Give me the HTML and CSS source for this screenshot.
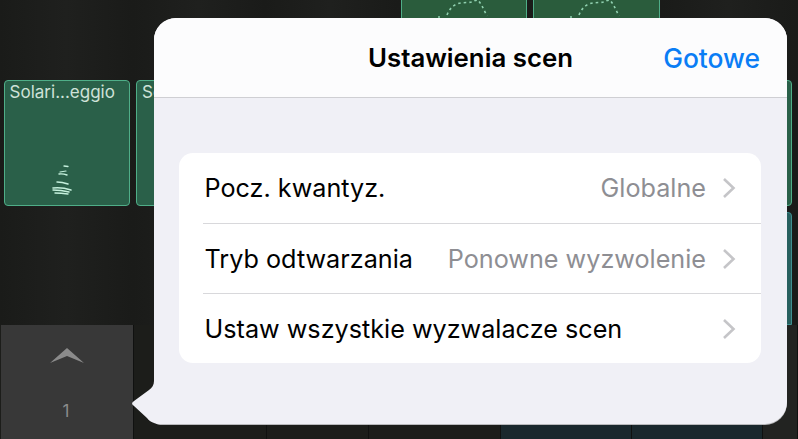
FILE: index.html
```html
<!DOCTYPE html>
<html lang="pl">
<head>
  <meta charset="UTF-8">
  <title>Ustawienia scen</title>
  <link rel="stylesheet" href="styles.css">
</head>
<body>

<div class="page">
  <div class="clips">
    <div class="clip clip-top clip-c4 clip-r1">
      <svg class="clip-arc" width="126" height="20" viewBox="0 0 126 20">
        <path d="M36 17 L38 17 M45 15 C47 10 50 6 55 4 C60 2 66 3 70 2 C72 1 74 0 76 0 C80 5 82 10 85 16" fill="none" stroke="#8fcfae" stroke-width="1.6" stroke-dasharray="2.5 3"/>
      </svg>
    </div>
    <div class="clip clip-top clip-c5 clip-r1">
      <svg class="clip-arc" width="126" height="20" viewBox="0 0 126 20">
        <path d="M36 17 L38 17 M45 15 C47 10 50 6 55 4 C60 2 66 3 70 2 C72 1 74 0 76 0 C80 5 82 10 85 16" fill="none" stroke="#8fcfae" stroke-width="1.6" stroke-dasharray="2.5 3"/>
      </svg>
    </div>
    <div class="clip clip-green clip-c1 clip-r2">
      <span class="clip-name">Solari...eggio</span>
      <svg class="clip-wave" width="26" height="32" viewBox="0 0 26 32">
        <g fill="none" stroke="#c4f0dc" stroke-linecap="round">
          <path d="M16 2 L20 2.5" stroke-width="1.3"/>
          <path d="M12 8 L18 7" stroke-width="1.2"/>
          <path d="M11 10 Q15 9.5 19 11" stroke-width="1.4"/>
          <path d="M9 18 Q14 18 20 20" stroke-width="1.5"/>
          <path d="M5 24 Q14 23 23 26" stroke-width="1.6"/>
          <path d="M5 26 Q13 26 21 28" stroke-width="1.4"/>
          <path d="M7 29 Q13 29 20 30" stroke-width="1.4"/>
        </g>
      </svg>
    </div>
    <div class="clip clip-green clip-c2 clip-r2">
      <span class="clip-name">Solari...eggio</span>
    </div>
    <div class="clip clip-green clip-c6 clip-r2"></div>
    <div class="clip clip-teal clip-c6 clip-r3"></div>
  </div>

  <div class="scenes">
    <div class="scene scene-active">
      <svg width="34" height="15" viewBox="0 0 34 15">
        <path d="M0 15 L17 0 L34 15 L17 8 Z" fill="#8b8b8b"/>
      </svg>
      <span class="scene-num">1</span>
    </div>
    <div class="scene scene-w133"></div>
    <div class="scene scene-w102"></div>
    <div class="scene scene-w132"></div>
    <div class="scene scene-w131 scene-teal"></div>
    <div class="scene scene-w131 scene-teal"></div>
    <div class="scene scene-end"></div>
  </div>

  <div class="popover">
    <svg class="popover-tail" width="30" height="46" viewBox="0 0 30 46">
      <path d="M23 0 L23 3 C23 7 21 10 18 12 L3 23 C0.5 25 0.5 26 3 28 L16 40 C19 44 24 46 30 46 L30 0 Z" fill="#f0f0f6"/>
    </svg>
    <div class="popover-head">
      <h2 class="popover-title">Ustawienia scen</h2>
      <span class="popover-done">Gotowe</span>
    </div>
    <div class="popover-body">
      <div class="card">
        <div class="row">
          <span class="row-label">Pocz. kwantyz.</span>
          <span class="row-value">Globalne</span>
          <svg class="row-chevron" width="14" height="22" viewBox="0 0 14 22">
            <path d="M2 2 L11.5 11 L2 20" fill="none" stroke="#c5c5c8" stroke-width="2.6"/>
          </svg>
        </div>
        <div class="row">
          <span class="row-label">Tryb odtwarzania</span>
          <span class="row-value">Ponowne wyzwolenie</span>
          <svg class="row-chevron" width="14" height="22" viewBox="0 0 14 22">
            <path d="M2 2 L11.5 11 L2 20" fill="none" stroke="#c5c5c8" stroke-width="2.6"/>
          </svg>
        </div>
        <div class="row">
          <span class="row-label">Ustaw wszystkie wyzwalacze scen</span>
          <svg class="row-chevron" width="14" height="22" viewBox="0 0 14 22">
            <path d="M2 2 L11.5 11 L2 20" fill="none" stroke="#c5c5c8" stroke-width="2.6"/>
          </svg>
        </div>
      </div>
    </div>
  </div>
</div>

</body>
</html>
```

FILE: styles.css
```css
body {
  margin: 0;
  font-family: Inter, "Noto Sans", sans-serif;
}
.page {
  position: relative;
  width: 798px;
  height: 439px;
  overflow: hidden;
  background: #1b1c1a;
}

/* clip grid behind the popover */
.clips {
  display: grid;
  grid-template-columns: repeat(6, 132.4px);
  grid-template-rows: 77px 132px 116px;
  padding-left: 0.6px;
  height: 325px;
  background: repeating-linear-gradient(90deg, #1a1b19 0, #1f201e 66px, #1a1b19 132.4px);
}
.clip {
  box-sizing: border-box;
  position: relative;
  margin: 3px;
  border: 1.5px solid #4fae88;
  border-radius: 4px;
  overflow: hidden;
}
.clip-green {
  background: #2a6049;
}
.clip-top {
  background: #2a5c3c;
}
.clip-teal {
  background: #28605f;
  border-color: #3f8f90;
  margin-bottom: 0;
  border-radius: 4px 4px 0 0;
}
.clip-c1 { grid-column: 1; }
.clip-c2 { grid-column: 2; }
.clip-c4 { grid-column: 4; }
.clip-c5 { grid-column: 5; }
.clip-c6 { grid-column: 6; }
.clip-r1 { grid-row: 1; margin-top: 0; border-top: none; border-radius: 0 0 4px 4px; }
.clip-r2 { grid-row: 2; }
.clip-r3 { grid-row: 3; }
.clip-name {
  display: block;
  padding: 1px 0 0 5px;
  font-size: 17px;
  line-height: 20px;
  color: #cfe2d8;
  white-space: nowrap;
}
.clip-arc {
  display: block;
}
.clip-wave {
  position: absolute;
  left: 43px;
  bottom: 9px;
}

/* scene strip */
.scenes {
  display: flex;
  height: 114px;
  background: #1c1d1a;
}
.scene {
  box-sizing: border-box;
  border-right: 1px solid #101110;
}
.scene-active {
  display: flex;
  flex-direction: column;
  align-items: center;
  width: 133px;
  margin-left: 1px;
  padding-top: 23px;
  background: #383838;
}
.scene-num {
  margin-top: 38px;
  margin-right: 2px;
  font-size: 17px;
  color: #8b8b8b;
}
.scene-w133 { width: 133px; }
.scene-w102 { width: 102px; }
.scene-w132 { width: 132px; }
.scene-w131 { width: 131px; }
.scene-teal { background: #1a282d; }
.scene-end {
  flex: 1;
  background: #222321;
}

/* popover */
.popover {
  position: absolute;
  left: 154px;
  top: 18px;
  width: 633px;
  height: 406px;
  background: #f0f0f6;
  border-radius: 22px 22px 22px 6px;
  box-shadow: 0 1px 0 #b9b9bc;
}
.popover-tail {
  position: absolute;
  left: -23px;
  top: 360px;
}
.popover-head {
  position: relative;
  display: flex;
  align-items: center;
  justify-content: center;
  height: 79px;
  background: #fcfcfd;
  border-bottom: 1px solid #cfcfd3;
  border-radius: 22px 22px 0 0;
}
.popover-title {
  margin: 0;
  font-size: 25.8px;
  font-weight: 600;
  color: #000;
}
.popover-done {
  position: absolute;
  right: 27px;
  top: 24px;
  font-size: 26.4px;
  font-weight: 500;
  color: #0a7df5;
}
.popover-body {
  padding: 55px 26px 0 25px;
}
.card {
  background: #fff;
  border-radius: 14px;
}
.row {
  display: flex;
  align-items: center;
  height: 70px;
  margin-left: 24px;
  padding-right: 25px;
  border-top: 1px solid #d8d8db;
  box-sizing: border-box;
}
.row:first-child {
  border-top: none;
}
.row-label {
  margin-left: 1.5px;
  flex: 1;
  font-size: 25.2px;
  color: #000;
  white-space: nowrap;
}
.row-value {
  font-size: 25.2px;
  color: #8e8e93;
  white-space: nowrap;
}
.row-chevron {
  margin-left: 16px;
}
```
